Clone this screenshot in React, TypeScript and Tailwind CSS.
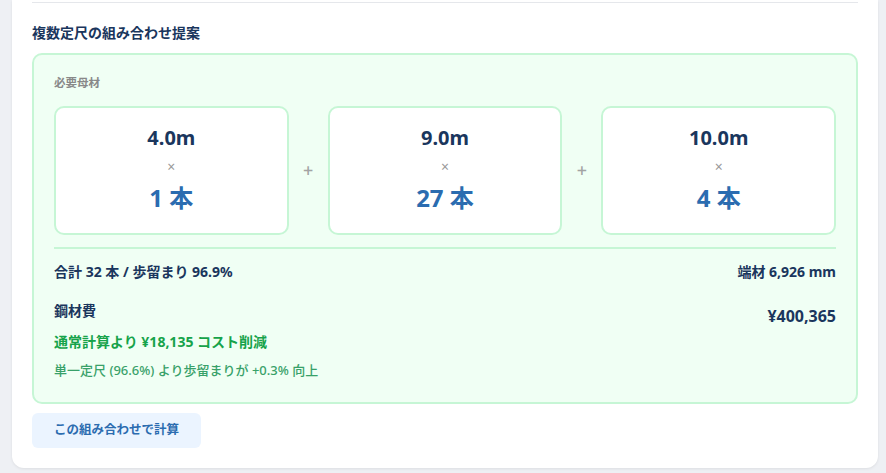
const font = { fontFamily: '"Noto Sans", "Noto Sans CJK JP", sans-serif' };

type Stock = { length: string; count: number };

const stocks: Stock[] = [
  { length: '4.0m', count: 1 },
  { length: '9.0m', count: 27 },
  { length: '10.0m', count: 4 },
];

function StockCard({ stock }: { stock: Stock }) {
  return (
    <div className="flex-1 rounded-[10px] border-2 border-[#c6f6d5] bg-white pt-4 pb-[19px] flex flex-col items-center">
      <div className="text-[20px] leading-7 font-bold text-[#1a365d]">{stock.length}</div>
      <div className="mt-[7px] text-[14px] leading-4 text-[#999]">×</div>
      <div className="mt-[7px] text-[24px] leading-8 font-bold text-[#2b6cb0]">{stock.count} 本</div>
    </div>
  );
}

export default function App() {
  return (
    <div className="min-h-screen bg-[#eef0f4] pl-3 pr-2 pb-[6px]" style={font}>
      <div className="bg-white rounded-b-xl shadow-[0_1px_3px_rgba(0,0,0,0.08)] px-5 pt-[2px] pb-5">
        <div className="h-px bg-[#e5e7eb]" />

        <h3 className="mt-5 mb-2.5 text-[14px] leading-5 font-bold text-[#1a365d]">複数定尺の組み合わせ提案</h3>

        <div className="rounded-[10px] border-2 border-[#c6f6d5] bg-[#f0fff4] px-5 pt-5 pb-[22px]">
          <div className="text-[11.5px] leading-4 font-bold text-[#888]">必要母材</div>

          <div className="mt-[15px] flex items-center">
            {stocks.map((s, i) => (
              <div key={s.length} className="contents">
                {i > 0 && (
                  <div className="w-[39px] shrink-0 text-center text-[18px] font-medium text-[#a3a3a3]">+</div>
                )}
                <StockCard stock={s} />
              </div>
            ))}
          </div>

          <div className="mt-3 h-[2px] bg-[#c6f6d5]" />

          <div className="mt-[13px] flex items-center justify-between text-[14px] leading-5 font-bold text-[#1a365d]">
            <span>合計 32 本 / 歩留まり 96.9%</span>
            <span>端材 6,926 mm</span>
          </div>

          <div className="mt-[19px] flex justify-between">
            <div className="text-[14px] leading-5 font-bold text-[#1a365d]">鋼材費</div>
            <div className="mt-[3px] text-[16px] leading-6 font-bold text-[#1a365d]">¥400,365</div>
          </div>

          <div className="mt-[4px] text-[14px] leading-5 font-bold text-[#16a34a]">通常計算より ¥18,135 コスト削減</div>
          <div className="mt-2 text-[13px] leading-5 font-medium text-[#38a169]">単一定尺 (96.6%) より歩留まりが +0.3% 向上</div>
        </div>

        <button className="mt-[9px] h-[35px] px-[22px] rounded-md bg-[#ebf4ff] text-[12.5px] font-bold text-[#2b6cb0]">
          この組み合わせで計算
        </button>
      </div>
    </div>
  );
}
